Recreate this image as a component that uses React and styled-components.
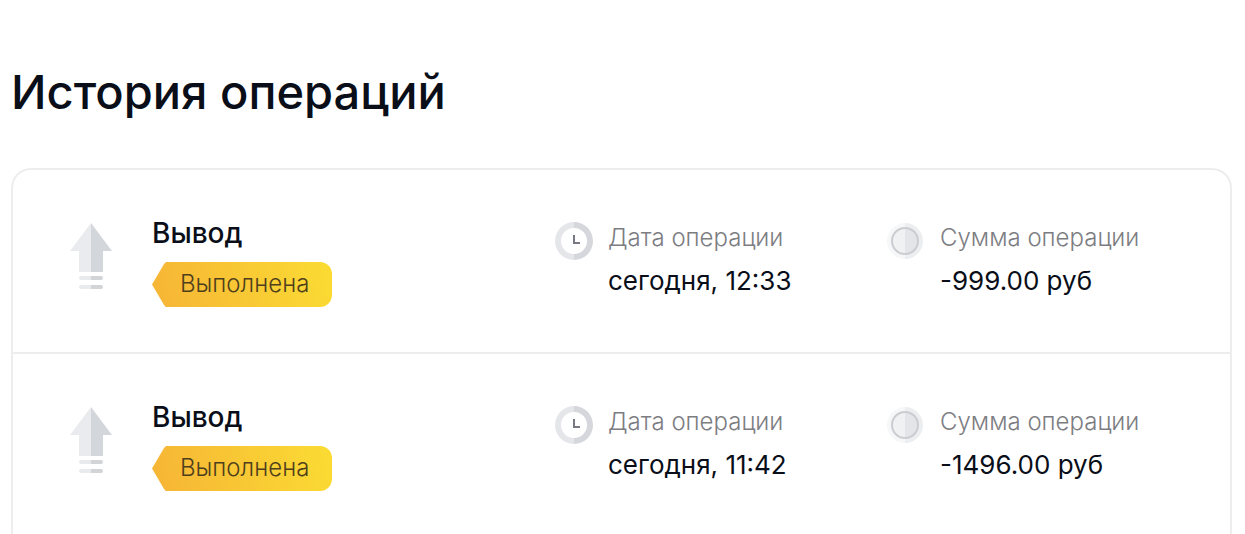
import React from "react";
import styled, { createGlobalStyle } from "styled-components";

const GlobalStyle = createGlobalStyle`
  * { box-sizing: border-box; }
  body {
    margin: 0;
    background: #fff;
    color: #090e18;
    font-family: Inter, "Noto Sans", sans-serif;
  }
  h1, h2, p, dl, dt, dd, ul { margin: 0; padding: 0; }
`;

const Page = styled.main`
  padding: 64px 13px 0 11px;
`;

const Heading = styled.h1`
  font-size: 47px;
  line-height: 56px;
  font-weight: 500;
`;

const Card = styled.ul`
  margin-top: 48px;
  list-style: none;
  border: 2px solid #ededee;
  border-bottom: 0;
  border-radius: 20px 20px 0 0;
`;

const Row = styled.li`
  display: grid;
  grid-template-columns: 485fr 332fr 343fr;
  align-items: start;
  padding: 46px 0 45px 57px;
  border-bottom: 2px solid #ededee;
`;

const Operation = styled.div`
  display: flex;
  gap: 40px;
`;

const ArrowIcon = styled.svg`
  flex: none;
  width: 42px;
  height: 66px;
  margin-top: 7px;
`;

const OperationTitle = styled.h2`
  font-size: 28px;
  line-height: 34px;
  font-weight: 500;
`;

const Badge = styled.p`
  width: 180px;
  margin-top: 12px;
  padding: 6px 0 7px 28px;
  border-radius: 0 12px 12px 0;
  clip-path: polygon(0 50%, 12px 2px, 14px 0, 100% 0, 100% 100%, 14px 100%, 12px 43px);
  background: linear-gradient(75deg, #f6b436, #fbdc33);
  color: #4e3f1c;
  font-size: 24px;
  line-height: 32px;
  font-weight: 300;
  white-space: nowrap;
`;

const Detail = styled.div`
  display: flex;
  padding-top: 6px;
  gap: 15px;
`;

const DetailIcon = styled.svg`
  flex: none;
  width: 38px;
  height: 38px;
`;

const Pair = styled.dl`
  white-space: nowrap;
`;

const Label = styled.dt`
  color: #7c7d82;
  font-size: 24px;
  line-height: 32px;
  font-weight: 300;
`;

const Value = styled.dd`
  margin-top: 10px;
  font-size: 26px;
  line-height: 34px;
  font-weight: 400;
`;

function Withdraw() {
  return (
    <ArrowIcon viewBox="0 0 42 66" aria-hidden="true">
      <path d="M21 0 0 28h9v21h12z" fill="#e9ebee" />
      <path d="M21 0 42 28h-9v21H21z" fill="#d3d6db" />
      <path d="M21 53H11a2 2 0 0 0 0 4h10zM21 62H11a2 2 0 0 0 0 4h10z" fill="#e9eaeb" />
      <path d="M21 53h10a2 2 0 0 1 0 4H21zM21 62h10a2 2 0 0 1 0 4H21z" fill="#d3d4d6" />
    </ArrowIcon>
  );
}

function Clock() {
  return (
    <DetailIcon viewBox="0 0 38 38" aria-hidden="true">
      <path d="M19 0a19 19 0 0 0 0 38v-6a13 13 0 0 1 0-26z" fill="#e5e6ea" />
      <path d="M19 0a19 19 0 0 1 0 38v-6a13 13 0 0 0 0-26z" fill="#d6d7dd" />
      <path d="M19 13v8h6" fill="none" stroke="#777984" strokeWidth="2" />
    </DetailIcon>
  );
}

function Coin() {
  return (
    <DetailIcon viewBox="0 0 38 38" aria-hidden="true">
      <path d="M18 1a18 18 0 0 0 0 36z" fill="#f6f7f8" />
      <path d="M18 1a18 18 0 0 1 0 36z" fill="#eceef0" />
      <path d="M18 6a13 13 0 0 0 0 26z" fill="#eff1f3" />
      <path d="M18 6a13 13 0 0 1 0 26z" fill="#e3e5e9" />
      <circle cx="18" cy="19" r="13" fill="none" stroke="#caccd1" strokeWidth="2" />
    </DetailIcon>
  );
}

const operations = [
  { id: 1, title: "Вывод", status: "Выполнена", date: "сегодня, 12:33", amount: "-999.00 руб" },
  { id: 2, title: "Вывод", status: "Выполнена", date: "сегодня, 11:42", amount: "-1496.00 руб" },
];

export default function App() {
  return (
    <>
      <GlobalStyle />
      <Page>
        <Heading>История операций</Heading>
        <Card>
          {operations.map((op) => (
            <Row key={op.id}>
              <Operation>
                <Withdraw />
                <div>
                  <OperationTitle>{op.title}</OperationTitle>
                  <Badge>{op.status}</Badge>
                </div>
              </Operation>
              <Detail>
                <Clock />
                <Pair>
                  <Label>Дата операции</Label>
                  <Value>{op.date}</Value>
                </Pair>
              </Detail>
              <Detail>
                <Coin />
                <Pair>
                  <Label>Сумма операции</Label>
                  <Value>{op.amount}</Value>
                </Pair>
              </Detail>
            </Row>
          ))}
        </Card>
      </Page>
    </>
  );
}
